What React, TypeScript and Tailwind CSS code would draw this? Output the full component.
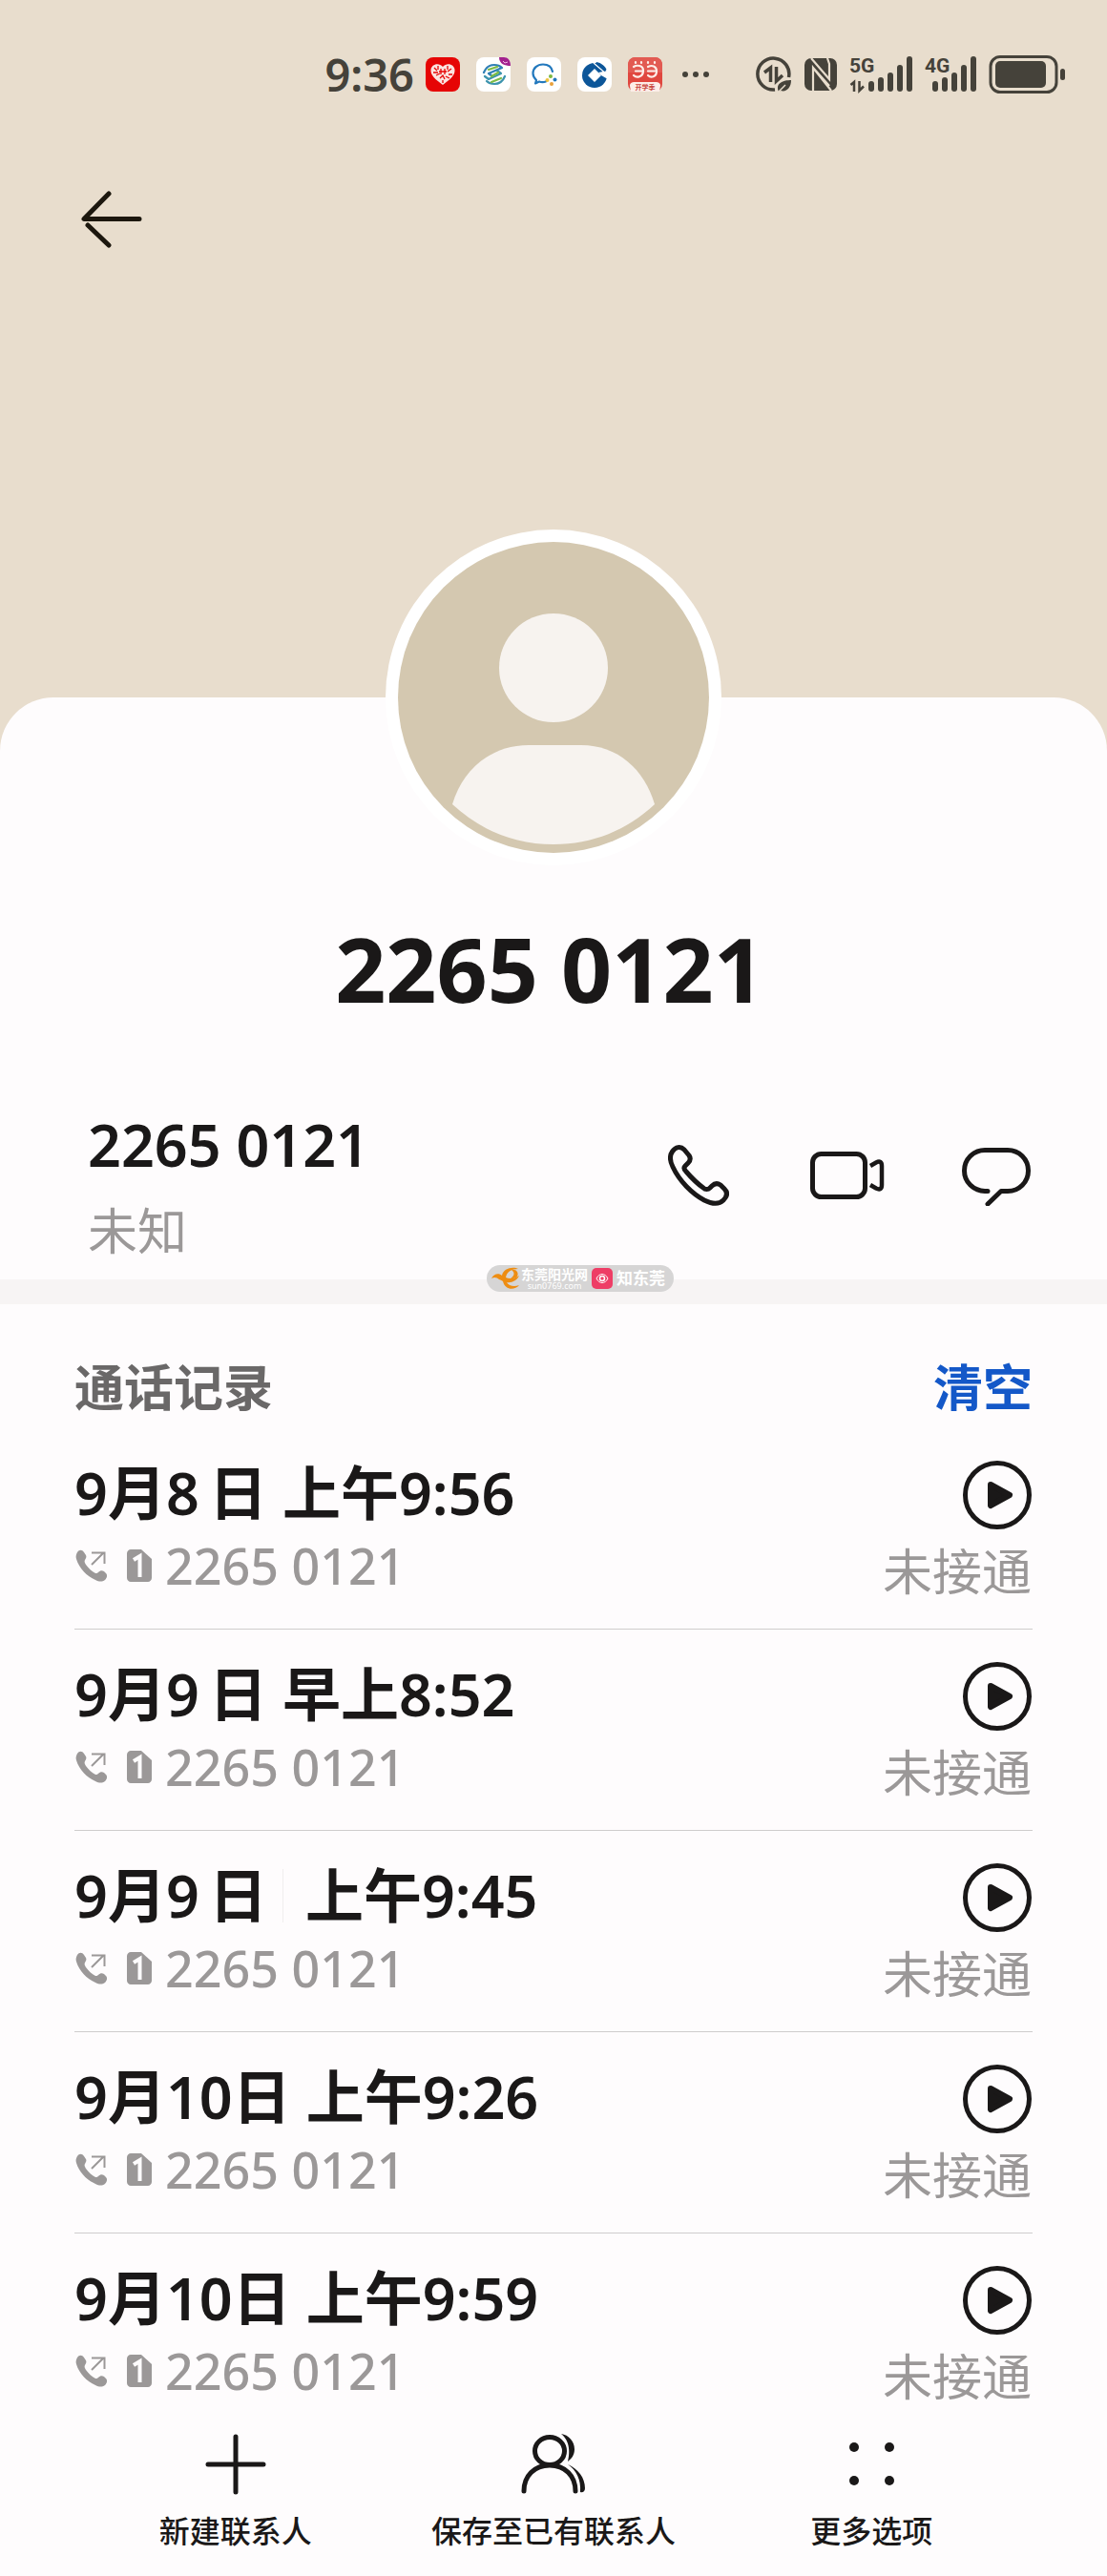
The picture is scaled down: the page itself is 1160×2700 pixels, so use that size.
import React from 'react';

const records = [
  { id: 1, date: '9月8\u2009日', time: '上午9:56' },
  { id: 2, date: '9月9\u2009日', time: '早上8:52' },
  { id: 3, date: '9月9\u2009日', time: '上午9:45', divided: true },
  { id: 4, date: '9月10日', time: '上午9:26' },
  { id: 5, date: '9月10日', time: '上午9:59' },
];

const PHONE_NUMBER = '2265 0121';

function AppBadges() {
  return (
    <div className="flex items-center gap-[17px]">
      <svg className="w-9 h-9" viewBox="0 0 36 36">
        <rect width="36" height="36" rx="8" fill="#e60505" />
        <path d="M18 29C10 23 5 19 5.500 13C6 7 14 5 18 10C22 5 30 7 30.500 13C31 19 26 23 18 29Z" fill="#fbe4e0" />
        <path d="M9 11l3 3M13 9v4M8 16h5M11 19l4-2M23 9v4M27 12l-4 3M24 18h4M21 20l4 2M15 22l3-3 2 4M14 15h8M16 12v6M20 12v6M18 24v3" stroke="#e60505" strokeWidth="1.300" fill="none" />
      </svg>
      <svg className="w-9 h-9" viewBox="0 0 36 36">
        <rect width="36" height="36" rx="8" fill="#fff" />
        <g fill="none" strokeWidth="2.200" strokeLinecap="round" strokeLinejoin="round">
          <path d="M8 16C10 11 14 8 19 8C22 8 25 9 27 11L13 17L17 20" stroke="#2f7fb5" />
          <path d="M11 25C13 27 16 28 19 28C24 28 28 25 30 20M9 20L13 23L26 17L22 14" stroke="#3c93ad" />
          <path d="M13 13L22 10M16 26L26 22M16 20L23 16" stroke="#7dbb45" />
        </g>
        <path d="M24 0H29C33 0 36 3 36 9C30 9 24 7 24 0Z" fill="#a3218e" />
        <path d="M28 4l2 2 3-1" stroke="#f2b4e4" strokeWidth="1" fill="none" />
      </svg>
      <svg className="w-9 h-9" viewBox="0 0 36 36">
        <rect width="36" height="36" rx="8" fill="#fff" />
        <path d="M27 15C26 10 22 7.500 17 7.500C11 7.500 6.500 11.500 6.500 17C6.500 20 8 22 10 24L9 27.500L13 25.500C15 26.300 18 26.300 20 25.500" fill="none" stroke="#2278bd" strokeWidth="2.200" strokeLinecap="round" strokeLinejoin="round" />
        <circle cx="25" cy="20" r="2" fill="#7cb83f" />
        <circle cx="29.500" cy="23.500" r="2" fill="#2278bd" />
        <circle cx="26" cy="28" r="2" fill="#e9a13a" />
        <circle cx="21.500" cy="24" r="2" fill="#f0c23d" />
      </svg>
      <svg className="w-9 h-9" viewBox="0 0 36 36">
        <rect width="36" height="36" rx="8" fill="#fff" />
        <circle cx="18" cy="19" r="13" fill="#0c5699" />
        <path d="M18 12L25 19L18 26L11 19Z" fill="#fff" />
        <path d="M22 16L32 14V23L25 19Z" fill="#fff" />
        <path d="M20 5C25 6 29 9 30.500 13L28 15L19 7Z" fill="#0c5699" />
        <path d="M17 6L28 15.500" stroke="#fff" strokeWidth="1.200" />
      </svg>
      <svg className="w-9 h-9" viewBox="0 0 36 36">
        <rect width="36" height="36" rx="8" fill="#e0473f" />
        <path d="M0 9C0 3 3 0 8 0H28C33 0 36 3 36 9V16H0Z" fill="#e25a52" />
        <g fill="none" stroke="#fdeee9" strokeWidth="2.200" strokeLinecap="round">
          <path d="M6 10C9 8 16 8 16 14C16 21 9 22 6 19M8 14.500H15" />
          <path d="M21 10C25 8 30 9 30 14.500C30 21 24 22 21 19M21 14.500H28" />
          <path d="M8 5v1M14 5v1M21 5v1M28 5v1" />
        </g>
        <path d="M2 30C2 27 4 26 7 26H29C32 26 34 27 34 30L33 36H3Z" fill="#fdeee9" />
        <text x="18" y="34" textAnchor="middle" fontSize="7" fontWeight="700" fill="#c9473f">开学季</text>
      </svg>
    </div>
  );
}

function SignalBars({ label, data }: { label: string; data?: boolean }) {
  return (
    <svg
      className={data ? 'w-[67px] h-[38px] overflow-visible' : 'w-[55px] h-[38px] overflow-visible'}
      viewBox={data ? '0 0 67 38' : '12 0 55 38'}
      fill="#45423a"
    >
      <text x={data ? 0 : 12} y="17" fontSize="21" fontWeight="700" fontFamily="Roboto, sans-serif">{label}</text>
      {data && (
        <g fill="none" stroke="#45423a" strokeWidth="2.500">
          <path d="M1.500 30L5 27V37" />
          <path d="M10.500 26V36L15 31.500" />
        </g>
      )}
      <rect x="20" y="26" width="6" height="11" rx="3" />
      <rect x="30" y="22" width="6" height="15" rx="3" />
      <rect x="40" y="17" width="6" height="20" rx="3" />
      <rect x="50" y="9" width="6" height="28" rx="3" />
      <rect x="60" y="0" width="6" height="37" rx="3" />
    </svg>
  );
}

function StatusBar() {
  return (
    <div className="flex items-center justify-end pt-12 pr-11 text-[#45423a]">
      <span className="text-[47px] leading-[60px] font-semibold mr-3">9:36</span>
      <AppBadges />
      <svg className="w-[30px] h-2 ml-5" viewBox="0 0 30 8" fill="#45423a">
        <circle cx="4" cy="4" r="3" />
        <circle cx="15" cy="4" r="3" />
        <circle cx="26" cy="4" r="3" />
      </svg>
      <div className="flex items-center gap-3 ml-12">
        <svg className="w-[38px] h-[38px]" viewBox="0 0 38 38" fill="none" stroke="#45423a">
          <path d="M20 35A16.500 16.500 0 1 1 34.500 22" strokeWidth="3.500" />
          <path d="M9 17L15.500 12V27M21.500 11V26L28 20" strokeWidth="3.500" />
          <path d="M24 37C20 28 29 25 37 25C37 33 32 38 26 36Z" fill="#45423a" stroke="none" />
          <path d="M23 38L31 30" stroke="#e8ddcd" strokeWidth="1.500" />
        </svg>
        <svg className="w-9 h-9" viewBox="0 0 36 36" fill="#45423a">
          <rect x="1" y="1" width="34" height="34" rx="7" />
          <path d="M8 1L27 23V7L25 1M10 35V11L29 35M10 11L27 30" fill="none" stroke="#e8ddcd" strokeWidth="2.200" />
        </svg>
        <SignalBars label="5G" data />
        <SignalBars label="4G" />
        <svg className="w-20 h-10" viewBox="0 0 80 40" fill="#45423a">
          <rect x="2" y="1.500" width="69" height="37" rx="10" fill="none" stroke="#45423a" strokeWidth="3" />
          <rect x="7" y="6" width="53" height="28" rx="5" />
          <rect x="75" y="14" width="5" height="12" rx="2.500" />
        </svg>
      </div>
    </div>
  );
}

function Avatar() {
  return (
    <div className="w-[352px] h-[352px] rounded-full bg-white flex items-center justify-center -mt-[176px] self-center">
      <svg className="w-[326px] h-[326px]" viewBox="0 0 326 326">
        <circle cx="163" cy="163" r="163" fill="#d4c8b0" />
        <circle cx="163" cy="132" r="57" fill="#f7f3ef" />
        <path d="M57 275C68 238 98 213 137 213H192C230 213 258 238 269 275C240 302 204 317 163 317C122 317 86 302 57 275Z" fill="#f7f3ef" />
      </svg>
    </div>
  );
}

/* Small source label laid over the divider */
function SourceTag() {
  return (
    <div className="absolute left-1/2 -top-[15px] -translate-x-1/2 ml-7 h-7 w-[196px] pl-1 rounded-full bg-[#d6d5d5] flex items-center text-white">
      <svg className="w-8 h-6 shrink-0" viewBox="0 0 32 24" fill="#ee8d12">
        <path d="M29 2C24 -1 13 1 12 9C9 6 3 7 1 12C4 10 7 11 9 13C11 14 12 14 13 15C15 24 25 25 30 19C25 21 19 20 17 16C22 17 28 14 30 9C26 12 20 13 16 11C17 5 22 2 29 2Z" />
        <path d="M22 3C27 2 30 6 28 10C26 12 23 12 21 12C25 9 26 6 22 3Z" />
      </svg>
      <div className="flex flex-col items-center w-[70px] shrink-0">
        <span className="text-[14px] leading-4 font-bold whitespace-nowrap">东莞阳光网</span>
        <span className="text-[9px] leading-2 whitespace-nowrap">sun0769.com</span>
      </div>
      <svg className="w-[22px] h-[22px] shrink-0 ml-1" viewBox="0 0 22 22" fill="none" stroke="#fff">
        <rect width="22" height="22" rx="5" fill="#ee3d66" stroke="none" />
        <path d="M5 11C8 5 14 5 17 11C14 17 8 17 5 11Z" />
        <circle cx="11" cy="11" r="2.500" strokeWidth="1.500" />
      </svg>
      <span className="text-[17px] leading-6 font-bold whitespace-nowrap ml-1">知东莞</span>
    </div>
  );
}

function ContactRow() {
  return (
    <div className="flex items-start justify-between pl-[92px] pr-20 mt-[101px] pb-[19px]">
      <div>
        <p className="text-[61px] leading-[72px] font-semibold">{PHONE_NUMBER}</p>
        <p className="text-[52px] leading-[64px] text-[#9b9898] mt-[22px]">未知</p>
      </div>
      <div className="flex items-center mt-9 gap-20">
        <button type="button" aria-label="拨打电话">
          <svg className="w-16 h-16" viewBox="0 0 64 64" fill="none" stroke="#1a1818" strokeWidth="5" strokeLinejoin="round">
            <path d="M4.500 7C8 2 13 1 17 5L22 11C24 14 23 17 21 19L18 22C16 24 17 26 19 28C25 35 30 40 37 45C39 47 42 47 44 45L46 43C49 40 52 40 55 42L59 46C63 50 62 54 58 58C53 63 46 62 38 58C25 51 12 38 5 23C2 17 1 12 4.500 7Z" />
          </svg>
        </button>
        <button type="button" aria-label="视频通话">
          <svg className="w-[84px] h-16" viewBox="-4 0 84 64" fill="none" stroke="#1a1818" strokeWidth="5">
            <rect x="3.500" y="9.500" width="55" height="45" rx="9" />
            <path d="M64 22L70 18.500C74 16.500 76 18 76 22V42C76 46 74 47.500 70 45.500L64 42" strokeWidth="4.500" />
          </svg>
        </button>
        <button type="button" aria-label="发送信息">
          <svg className="w-[72px] h-16" viewBox="0 0 72 64" fill="none" stroke="#1a1818" strokeWidth="5" strokeLinecap="round" strokeLinejoin="round">
            <path d="M27 48.500H24C12 48 2.500 39 2.500 27C2.500 15 12 5.500 24 5.500H48C60 5.500 69.500 15 69.500 27C69.500 39 60 48.500 48 48.500H41L27 62" />
          </svg>
        </button>
      </div>
    </div>
  );
}

function RecordRow({ date, time, divided }: { date: string; time: string; divided?: boolean }) {
  return (
    <li className="flex justify-between pt-8 pb-7 last:pb-0 border-b border-[#cfcdcd] last:border-b-0">
      <div>
        <p className="flex items-center gap-4 text-[61px] leading-[72px] font-semibold">
          <span>{date}</span>
          {divided && <span className="w-2 h-14 border-l border-[#f0eeee]" />}
          <span>{time}</span>
        </p>
        <div className="flex items-center mt-2 text-[#9b9898]">
          <svg className="w-[34px] h-[34px] ml-px" viewBox="0 0 34 34" fill="currentColor">
            <path d="M2 3C4 0 7 0 9 3L11 6C12 8 11 9 10 11C9 13 10 14 11 16C14 20 17 23 21 25C22 25 23 25 24 24C26 22 28 22 30 23L32 25C34 27 33 30 31 32C28 34 25 34 21 32C12 28 4 20 1 10C0 7 1 5 2 3Z" />
            <path d="M17 16L29 4M17 3.500H30.500V15" fill="none" stroke="currentColor" strokeWidth="2" />
          </svg>
          <svg className="w-[26px] h-[34px] ml-5" viewBox="0 0 26 34" fill="currentColor">
            <path d="M4 0H15L26 10V30C26 32 24 34 22 34H4C2 34 0 32 0 30V4C0 2 2 0 4 0Z" />
            <path d="M7 11L13.500 7V29" fill="none" stroke="#fefcfd" strokeWidth="4" />
          </svg>
          <span className="text-[52px] leading-[64px] font-medium ml-[14px]">{PHONE_NUMBER}</span>
        </div>
      </div>
      <div className="flex flex-col items-end pr-px">
        <button type="button" aria-label="播放录音" className="mt-[2px]">
          <svg className="w-[72px] h-[72px]" viewBox="0 0 72 72">
            <circle cx="36" cy="36" r="33.500" fill="none" stroke="#1a1818" strokeWidth="5" />
            <path d="M29 25L49 36L29 47Z" fill="#1a1818" stroke="#1a1818" strokeWidth="6" strokeLinejoin="round" />
          </svg>
        </button>
        <span className="text-[52px] leading-[64px] text-[#9b9898] mt-3">未接通</span>
      </div>
    </li>
  );
}

function BottomBar() {
  return (
    <footer className="grid grid-cols-3 px-20 pt-7 pb-6 text-[32px] leading-9 font-medium">
      <button type="button" className="flex flex-col items-center gap-5">
        <svg className="w-16 h-16" viewBox="0 0 64 64" stroke="#1a1818" strokeWidth="5" strokeLinecap="round">
          <path d="M32 3V61M3 32H61" />
        </svg>
        新建联系人
      </button>
      <button type="button" className="flex flex-col items-center gap-5">
        <svg className="w-[68px] h-16" viewBox="0 0 68 64" fill="none" stroke="#1a1818" strokeWidth="5" strokeLinecap="round">
          <ellipse cx="30" cy="18" rx="15.500" ry="14.500" />
          <path d="M3 60C3 44 14 33 30 33C46 33 57 44 57 60" />
          <path d="M42 0C50 1 56 8 56 16C56 22 53 26 49 29C51 21 52 8 42 0ZM49 32C60 37 67 46 67 57C67 60 65 62 62 61C63 48 58 38 49 32Z" fill="#1a1818" stroke="none" />
        </svg>
        保存至已有联系人
      </button>
      <button type="button" className="flex flex-col items-center gap-5">
        <svg className="w-16 h-16" viewBox="0 0 64 64" fill="#1a1818">
          <circle cx="14" cy="14" r="5" />
          <circle cx="51" cy="14" r="5" />
          <circle cx="14" cy="49" r="5" />
          <circle cx="51" cy="49" r="5" />
        </svg>
        更多选项
      </button>
    </footer>
  );
}

export default function App() {
  return (
    <div className="min-h-screen flex flex-col bg-[#e8ddcd] text-[#1a1818] font-['Noto_Sans','Noto_Sans_CJK_SC',sans-serif]">
      {/* Header */}
      <header className="min-h-[731px]">
        <StatusBar />
        <button type="button" aria-label="返回" className="block ml-[85px] mt-[90px]">
          <svg className="w-16 h-16" viewBox="0 0 64 64" fill="none" stroke="#1c170e" strokeWidth="5" strokeLinecap="round" strokeLinejoin="round">
            <path d="M29 5L3 31.500H61" />
            <path d="M7 38L29 59" />
          </svg>
        </button>
      </header>

      {/* Contact card */}
      <main className="flex-1 flex flex-col bg-[#fefcfd] rounded-t-[56px]">
        <Avatar />
        <h1 className="text-[93px] leading-[96px] font-bold text-center mt-[60px] pr-2">{PHONE_NUMBER}</h1>
        <ContactRow />

        <div className="relative h-[26px] bg-[#f7f4f4]">
          <SourceTag />
        </div>

        {/* Call log */}
        <section className="px-[78px] pt-[51px]">
          <div className="flex items-center justify-between text-[52px] leading-[72px] font-semibold">
            <h2 className="text-[#6a6868]">通话记录</h2>
            <button type="button" className="text-[#1458c8]">清空</button>
          </div>
          <ul className="mt-[7px]">
            {records.map((record) => (
              <RecordRow key={record.id} date={record.date} time={record.time} divided={record.divided} />
            ))}
          </ul>
        </section>

        <BottomBar />
      </main>
    </div>
  );
}
